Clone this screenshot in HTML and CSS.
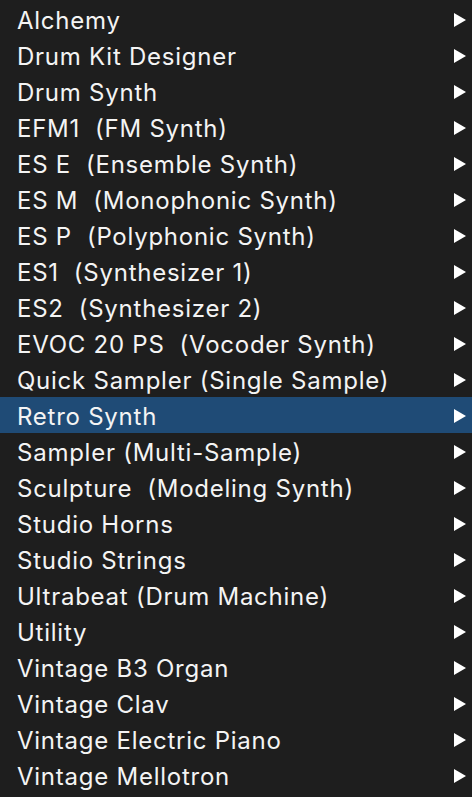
FILE: index.html
```html
<!DOCTYPE html>
<html>
<head>
<meta charset="utf-8">
<link rel="stylesheet" href="styles.css">
</head>
<body>
<ul class="menu">
  <li class="item"><span class="label">Alchemy</span><span class="arrow"></span></li>
  <li class="item"><span class="label">Drum Kit Designer</span><span class="arrow"></span></li>
  <li class="item"><span class="label">Drum Synth</span><span class="arrow"></span></li>
  <li class="item"><span class="label">EFM1  (FM Synth)</span><span class="arrow"></span></li>
  <li class="item"><span class="label">ES E  (Ensemble Synth)</span><span class="arrow"></span></li>
  <li class="item"><span class="label">ES M  (Monophonic Synth)</span><span class="arrow"></span></li>
  <li class="item"><span class="label">ES P  (Polyphonic Synth)</span><span class="arrow"></span></li>
  <li class="item"><span class="label">ES1  (Synthesizer 1)</span><span class="arrow"></span></li>
  <li class="item"><span class="label">ES2  (Synthesizer 2)</span><span class="arrow"></span></li>
  <li class="item"><span class="label">EVOC 20 PS  (Vocoder Synth)</span><span class="arrow"></span></li>
  <li class="item"><span class="label">Quick Sampler (Single Sample)</span><span class="arrow"></span></li>
  <li class="item selected"><span class="label">Retro Synth</span><span class="arrow"></span></li>
  <li class="item"><span class="label">Sampler (Multi-Sample)</span><span class="arrow"></span></li>
  <li class="item"><span class="label">Sculpture  (Modeling Synth)</span><span class="arrow"></span></li>
  <li class="item"><span class="label">Studio Horns</span><span class="arrow"></span></li>
  <li class="item"><span class="label">Studio Strings</span><span class="arrow"></span></li>
  <li class="item"><span class="label">Ultrabeat (Drum Machine)</span><span class="arrow"></span></li>
  <li class="item"><span class="label">Utility</span><span class="arrow"></span></li>
  <li class="item"><span class="label">Vintage B3 Organ</span><span class="arrow"></span></li>
  <li class="item"><span class="label">Vintage Clav</span><span class="arrow"></span></li>
  <li class="item"><span class="label">Vintage Electric Piano</span><span class="arrow"></span></li>
  <li class="item"><span class="label">Vintage Mellotron</span><span class="arrow"></span></li>
</ul>
</body>
</html>
```
FILE: styles.css
```css
html, body {
  margin: 0;
  padding: 0;
  background: #1e1e1e;
  height: 100%;
}
.menu {
  list-style: none;
  margin: 0;
  padding: 1px 0 0 0;
  font-family: Inter, "Liberation Sans", sans-serif;
  font-size: 24px;
  letter-spacing: 0.75px;
  color: #f4f4f4;
}
.item {
  box-sizing: border-box;
  height: 36px;
  display: flex;
  align-items: center;
  justify-content: space-between;
  padding: 0 6px 0 17px;
}
.label {
  white-space: pre;
  padding-top: 3px;
}
.selected {
  background: #1f4b76;
}
.arrow {
  width: 0;
  height: 0;
  margin-top: 1px;
  border-top: 7px solid transparent;
  border-bottom: 7px solid transparent;
  border-left: 12px solid #ffffff;
}
```
